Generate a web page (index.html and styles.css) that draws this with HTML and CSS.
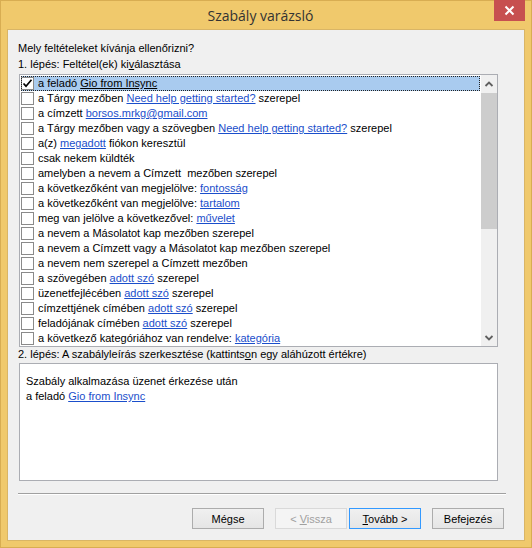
FILE: index.html
```html
<!DOCTYPE html>
<html lang="hu">
<head>
<meta charset="utf-8">
<title>Szabály varázsló</title>
<link rel="stylesheet" href="styles.css">
</head>
<body>
<div class="window">
  <div class="titlebar">
    <div class="title">Szabály varázsló</div>
    <div class="close"><svg width="31" height="21" viewBox="0 0 31 21"><path d="M11.5 6.5 L19.5 14.5 M19.5 6.5 L11.5 14.5" stroke="#fff" stroke-width="2" fill="none"/></svg></div>
  </div>
  <div class="client">
    <div class="label first">Mely feltételeket kívánja ellenőrizni?</div>
    <div class="label second">1. lépés: Feltétel(ek) ki<u>v</u>álasztása</div>
    <div class="listbox">
      <div class="rows">
        <div class="row selected"><span class="cb"><svg width="11" height="11" viewBox="0 0 11 11"><path d="M1.5 5.5 L4 8.2 L9.5 1.8" stroke="#000" stroke-width="1.7" fill="none"/></svg></span><span class="txt">a feladó <span class="sel-link">Gio from Insync</span></span></div>
        <div class="row"><span class="cb"></span><span class="txt">a Tárgy mezőben <a class="link">Need help getting started?</a> szerepel</span></div>
        <div class="row"><span class="cb"></span><span class="txt">a címzett <a class="link">borsos.mrkg@gmail.com</a></span></div>
        <div class="row"><span class="cb"></span><span class="txt">a Tárgy mezőben vagy a szövegben <a class="link">Need help getting started?</a> szerepel</span></div>
        <div class="row"><span class="cb"></span><span class="txt">a(z) <a class="link">megadott</a> fiókon keresztül</span></div>
        <div class="row"><span class="cb"></span><span class="txt">csak nekem küldték</span></div>
        <div class="row"><span class="cb"></span><span class="txt">amelyben a nevem a Címzett  mezőben szerepel</span></div>
        <div class="row"><span class="cb"></span><span class="txt">a következőként van megjelölve: <a class="link">fontosság</a></span></div>
        <div class="row"><span class="cb"></span><span class="txt">a következőként van megjelölve: <a class="link">tartalom</a></span></div>
        <div class="row"><span class="cb"></span><span class="txt">meg van jelölve a következővel: <a class="link">művelet</a></span></div>
        <div class="row"><span class="cb"></span><span class="txt">a nevem a Másolatot kap mezőben szerepel</span></div>
        <div class="row"><span class="cb"></span><span class="txt">a nevem a Címzett vagy a Másolatot kap mezőben szerepel</span></div>
        <div class="row"><span class="cb"></span><span class="txt">a nevem nem szerepel a Címzett mezőben</span></div>
        <div class="row"><span class="cb"></span><span class="txt">a szövegében <a class="link">adott szó</a> szerepel</span></div>
        <div class="row"><span class="cb"></span><span class="txt">üzenetfejlécében <a class="link">adott szó</a> szerepel</span></div>
        <div class="row"><span class="cb"></span><span class="txt">címzettjének címében <a class="link">adott szó</a> szerepel</span></div>
        <div class="row"><span class="cb"></span><span class="txt">feladójának címében <a class="link">adott szó</a> szerepel</span></div>
        <div class="row"><span class="cb"></span><span class="txt">a következő kategóriához van rendelve: <a class="link">kategória</a></span></div>
      </div>
      <div class="scrollbar">
        <div class="sb-btn"><svg width="16" height="17" viewBox="0 0 16 17"><path d="M4.5 11 L8 7.5 L11.5 11" stroke="#606060" stroke-width="1.8" fill="none"/></svg></div>
        <div class="sb-track"><div class="sb-thumb"></div></div>
        <div class="sb-btn"><svg width="16" height="17" viewBox="0 0 16 17"><path d="M4.5 7 L8 10.5 L11.5 7" stroke="#606060" stroke-width="1.8" fill="none"/></svg></div>
      </div>
    </div>
    <div class="label third">2. lépés: A szabályleírás szerkesztése (kattints<u>o</u>n egy aláhúzott értékre)</div>
    <div class="desc">
      <div class="desc-line">Szabály alkalmazása üzenet érkezése után</div>
      <div class="desc-line">a feladó <a class="link">Gio from Insync</a></div>
    </div>
    <div class="separator"></div>
    <div class="buttons">
      <div class="btn"><span>Mégse</span></div>
      <div class="btn disabled gap-l"><span>&lt; <u>V</u>issza</span></div>
      <div class="btn default gap-s"><span><u>T</u>ovább &gt;</span></div>
      <div class="btn gap-l"><span>Befejezés</span></div>
    </div>
  </div>
</div>
</body>
</html>
```
FILE: styles.css
```css
html, body {
  margin: 0;
  padding: 0;
  background: #ffffff;
}

body {
  width: 532px;
  height: 548px;
  font-family: "Liberation Sans", Arial, sans-serif;
  font-size: 11px;
  color: #000;
}

.window {
  box-sizing: border-box;
  width: 532px;
  height: 548px;
  background: #f0c96c;
  border: 1px solid #d8ad52;
  padding: 0 6px 6px 6px;
  display: flex;
  flex-direction: column;
}

.titlebar {
  position: relative;
  height: 28px;
  display: flex;
  align-items: center;
  justify-content: center;
  padding-right: 11px;
}

.title {
  font-family: "Open Sans", "Noto Sans", sans-serif;
  font-size: 14px;
  color: #333333;
  padding-top: 1px;
}

.close {
  position: absolute;
  top: -1px;
  right: 0;
  width: 31px;
  height: 21px;
  background: #c75050;
  display: flex;
}

.client {
  flex: 1;
  background: #f0f0f0;
  border: 1px solid #d9b566;
  display: flex;
  flex-direction: column;
}

.label {
  line-height: 15px;
  height: 15px;
  padding-left: 10px;
  white-space: nowrap;
}

.label.first {
  margin-top: 11px;
}

.label.second {
  margin-top: 1px;
}

.listbox {
  box-sizing: border-box;
  margin-top: 2px;
  margin-left: 11px;
  width: 479px;
  height: 273px;
  border: 1px solid #abadb3;
  background: #ffffff;
  display: flex;
  overflow: hidden;
}

.rows {
  width: 459px;
  margin-left: 1px;
  padding-top: 1px;
  display: flex;
  flex-direction: column;
}

.row {
  height: 15px;
  display: flex;
  align-items: center;
  white-space: pre;
  flex-shrink: 0;
}

.row.selected {
  background: #a9cbef;
  outline: 1px dotted #222;
  outline-offset: -1px;
}

.cb {
  box-sizing: border-box;
  width: 13px;
  height: 13px;
  border: 1px solid #8a8a8a;
  background: #ffffff;
  display: flex;
  align-items: center;
  justify-content: center;
  flex-shrink: 0;
}

.txt {
  margin-left: 4px;
  line-height: 15px;
}

.link {
  color: #1a4ecb;
  text-decoration: underline;
  text-underline-offset: 1px;
}

.sel-link {
  text-decoration: underline;
  text-underline-offset: 1px;
}

.scrollbar {
  width: 16px;
  margin-left: 1px;
  display: flex;
  flex-direction: column;
  background: #f0f0f0;
}

.sb-btn {
  height: 17px;
  display: flex;
  flex-shrink: 0;
}

.sb-track {
  flex: 1;
  padding-top: 1px;
}

.sb-thumb {
  height: 136px;
  background: #cdcdcd;
}

.desc {
  box-sizing: border-box;
  margin-left: 11px;
  width: 479px;
  height: 118px;
  margin-top: 1px;
  border: 1px solid #abadb3;
  background: #ffffff;
  padding: 10px 0 0 6px;
}

.desc-line {
  line-height: 15px;
  white-space: nowrap;
}

.separator {
  margin-top: 12px;
  margin-left: 10px;
  width: 488px;
  height: 0;
  border-top: 1px solid #a0a0a0;
  border-bottom: 1px solid #ffffff;
}

.buttons {
  margin-top: 13px;
  display: flex;
  justify-content: flex-end;
  padding-right: 20px;
}

.btn {
  box-sizing: border-box;
  width: 72px;
  height: 21px;
  border: 1px solid #acacac;
  background: linear-gradient(#f0f0f0, #e5e5e5);
  display: flex;
  align-items: center;
  justify-content: center;
  white-space: pre;
}

.btn.gap-l {
  margin-left: 11px;
}

.btn.gap-s {
  margin-left: 2px;
}

.btn.default {
  border-color: #3399ff;
}

.btn.disabled {
  border-color: #d9d9d9;
  background: #f4f4f4;
  color: #a0a0a0;
}
```
